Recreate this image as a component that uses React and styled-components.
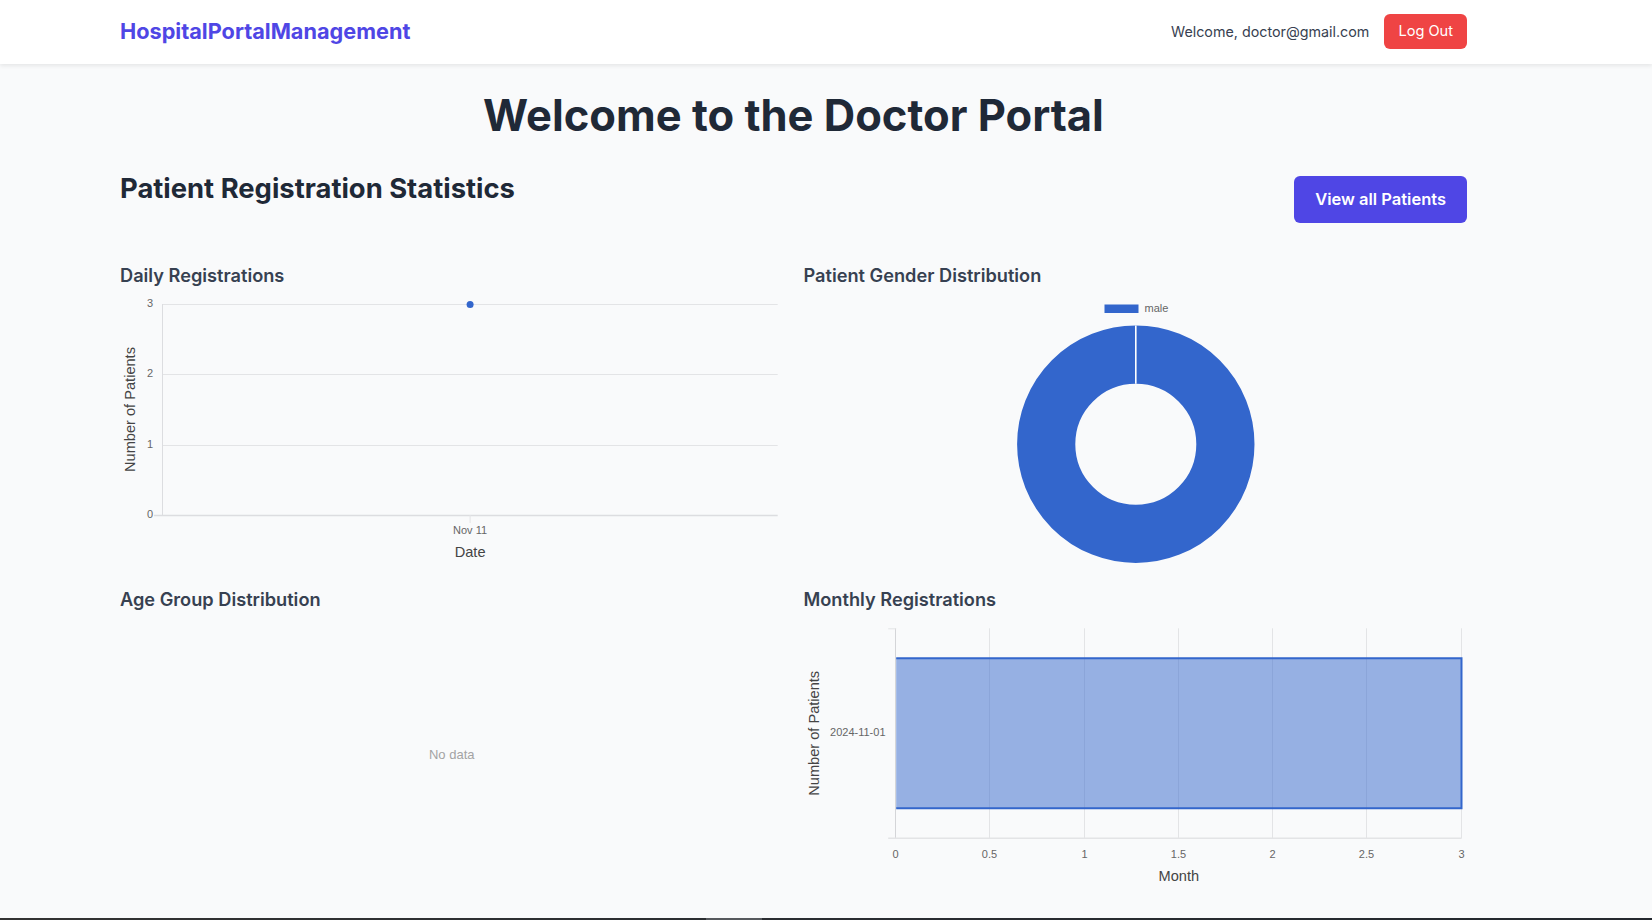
import React from "react";
import styled, { createGlobalStyle } from "styled-components";

const GlobalStyle = createGlobalStyle`
  html, body { margin: 0; padding: 0; }
  body {
    background: #f9fafb;
    font-family: Inter, "Noto Sans", sans-serif;
    overflow: hidden;
  }
  * { box-sizing: border-box; }
`;

const BLUE = "#3366cc";
const CHART_FONT = '"Liberation Sans", Arial, sans-serif';

const Container = styled.div`
  width: 1347px;
  margin-left: 120px;
`;

const NavBar = styled.header`
  background: #ffffff;
  box-shadow: 0 2px 4px rgba(0, 0, 0, 0.08);
  position: relative;
  z-index: 1;
  padding-bottom: 2px;
`;

const NavInner = styled(Container)`
  height: 62px;
  display: flex;
  align-items: center;
  justify-content: space-between;
`;

const Brand = styled.a`
  font-size: 21.7px;
  font-weight: 700;
  color: #4f46e5;
  text-decoration: none;
`;

const NavRight = styled.div`
  display: flex;
  align-items: center;
  gap: 15px;
`;

const WelcomeText = styled.span`
  font-size: 14.3px;
  color: #374151;
`;

const LogoutButton = styled.button`
  background: #ef4444;
  color: #ffffff;
  border: 0;
  border-radius: 6px;
  font-family: Inter, sans-serif;
  font-size: 14.6px;
  height: 35px;
  padding: 0 14px;
`;

const Main = styled(Container).attrs({ as: "main" })`
  padding: 25px 0 29px;
`;

const PageTitle = styled.h1`
  margin: 0 0 29px;
  text-align: center;
  font-size: 43.5px;
  line-height: 52px;
  font-weight: 700;
  color: #1f2937;
`;

const StatsHeader = styled.div`
  display: flex;
  align-items: center;
  justify-content: space-between;
  margin-bottom: 33px;
`;

const StatsTitle = styled.h2`
  margin: 1px 0 23px;
  font-size: 27.4px;
  line-height: 34px;
  font-weight: 700;
  color: #1f2937;
`;

const PrimaryButton = styled.button`
  background: #4f46e5;
  color: #ffffff;
  border: 0;
  border-radius: 6px;
  height: 47px;
  padding: 0 21px;
  font-family: Inter, sans-serif;
  font-size: 16.5px;
  font-weight: 600;
`;

const ChartGrid = styled.div`
  display: grid;
  grid-template-columns: 1fr 1fr;
  column-gap: 20px;
  row-gap: 20px;
`;

const Card = styled.section`
  display: flex;
  flex-direction: column;
`;

const CardTitle = styled.h3`
  margin: 0 0 8px;
  font-size: 18.2px;
  line-height: 28px;
  font-weight: 600;
  color: #374151;
`;

const ChartBox = styled.div`
  height: 268px;
  display: flex;
  align-items: center;
  justify-content: center;
`;

const ChartSvg = styled.svg`
  display: block;
  width: 100%;
  height: 268px;
  overflow: visible;
`;

const EmptyText = styled.span`
  font-family: ${CHART_FONT};
  font-size: 13px;
  color: #a3a3a3;
  margin-top: -2px;
`;

const Footer = styled.footer`
  height: 40px;
  background: linear-gradient(to right, #333333, #2a2d31 50%, #24282e);
  display: flex;
`;

const FooterTab = styled.div`
  margin-left: 706px;
  width: 56px;
  background: #56595d;
`;

const W = 663.5;

function AxisTitle({ x, y, rotate, children }) {
  return (
    <text
      x={x}
      y={y}
      transform={rotate ? `rotate(-90 ${x} ${y})` : undefined}
      textAnchor="middle"
      dominantBaseline="middle"
      fontFamily={CHART_FONT}
      fontSize="14.6"
      fill="#444"
    >
      {children}
    </text>
  );
}

function Tick({ x, y, anchor = "middle", children }) {
  return (
    <text
      x={x}
      y={y}
      textAnchor={anchor}
      dominantBaseline="middle"
      fontFamily={CHART_FONT}
      fontSize="11"
      fill="#666"
    >
      {children}
    </text>
  );
}

function DailyChart() {
  const x0 = 42.5;
  const x1 = 657.7;
  const y0 = 7;
  const y1 = 218;
  const values = [3, 2, 1, 0];
  const cx = (x0 + x1) / 2;
  return (
    <ChartSvg viewBox={`0 0 ${W} 268`}>
      {values.map((v, i) => {
        const y = Math.round(y0 + (i * (y1 - y0)) / 3) + 0.5;
        return (
          <g key={v}>
            <line
              x1={v === 0 ? 34 : x0}
              x2={x1}
              y1={y}
              y2={y}
              stroke={v === 0 ? "#dcdde0" : "#e3e4e6"}
              strokeWidth={v === 0 ? 1.5 : 1}
            />
            <Tick x={33} y={y} anchor="end">
              {v}
            </Tick>
          </g>
        );
      })}
      <line x1={x0} x2={x0} y1={y0} y2={y1} stroke="#dcdde0" />
      <line x1={cx} x2={cx} y1={y1} y2={y1 + 8} stroke="#e3e4e6" />
      <circle cx={cx} cy={y0 + 0.5} r="3.5" fill={BLUE} />
      <Tick x={cx} y={234}>
        Nov 11
      </Tick>
      <AxisTitle x={cx} y={256}>
        Date
      </AxisTitle>
      <AxisTitle x={11} y={112.5} rotate>
        Number of Patients
      </AxisTitle>
    </ChartSvg>
  );
}

function GenderChart() {
  const cx = 331.8;
  const cy = 147.2;
  const outer = 118.7;
  const inner = 60.5;
  return (
    <ChartSvg viewBox={`0 0 ${W} 268`}>
      <rect x={300.5} y={7.5} width={34} height={8.5} fill={BLUE} />
      <text
        x={340.5}
        y={12}
        dominantBaseline="middle"
        fontFamily={CHART_FONT}
        fontSize="11"
        fill="#666"
      >
        male
      </text>
      <circle
        cx={cx}
        cy={cy}
        r={(outer + inner) / 2}
        fill="none"
        stroke={BLUE}
        strokeWidth={outer - inner}
      />
      <line
        x1={cx}
        x2={cx}
        y1={cy - outer}
        y2={cy - inner}
        stroke="#ffffff"
        strokeWidth="1.6"
      />
    </ChartSvg>
  );
}

function MonthlyChart() {
  const x0 = 92.2;
  const x1 = 657.5;
  const y0 = 7.3;
  const y1 = 217.3;
  const ticks = [0, 0.5, 1, 1.5, 2, 2.5, 3];
  const step = (x1 - x0) / 6;
  const barTop = 37.3;
  const barBottom = 187.3;
  return (
    <ChartSvg viewBox={`0 0 ${W} 268`}>
      {ticks.map((t, i) => {
        const x = Math.round(x0 + i * step) - 0.5;
        return (
          <g key={t}>
            <line
              x1={x}
              x2={x}
              y1={y0}
              y2={y1}
              stroke={i === 0 ? "#d4d5d8" : "#e3e4e6"}
            />
            <Tick x={x} y={234}>
              {t}
            </Tick>
          </g>
        );
      })}
      <line x1={x0 - 8} x2={x0} y1={y0 + 0.5} y2={y0 + 0.5} stroke="#e3e4e6" />
      <line x1={x0 - 8} x2={x1} y1={y1} y2={y1} stroke="#e3e4e6" strokeWidth="1.5" />
      <rect
        x={x0}
        y={barTop}
        width={x1 - x0}
        height={barBottom - barTop}
        fill="rgba(51, 102, 204, 0.5)"
      />
      <path
        d={`M ${x0} ${barTop} H ${x1} V ${barBottom} H ${x0}`}
        fill="none"
        stroke={BLUE}
        strokeWidth="2"
      />
      <Tick x={81.5} y={112.3} anchor="end">
        2024-11-01
      </Tick>
      <AxisTitle x={374.85} y={256}>
        Month
      </AxisTitle>
      <AxisTitle x={11.5} y={112.3} rotate>
        Number of Patients
      </AxisTitle>
    </ChartSvg>
  );
}

export default function App() {
  return (
    <>
      <GlobalStyle />
      <NavBar>
        <NavInner>
          <Brand href="#">HospitalPortalManagement</Brand>
          <NavRight>
            <WelcomeText>Welcome, doctor@gmail.com</WelcomeText>
            <LogoutButton>Log Out</LogoutButton>
          </NavRight>
        </NavInner>
      </NavBar>
      <Main>
        <PageTitle>Welcome to the Doctor Portal</PageTitle>
        <StatsHeader>
          <StatsTitle>Patient Registration Statistics</StatsTitle>
          <PrimaryButton>View all Patients</PrimaryButton>
        </StatsHeader>
        <ChartGrid>
          <Card>
            <CardTitle>Daily Registrations</CardTitle>
            <ChartBox>
              <DailyChart />
            </ChartBox>
          </Card>
          <Card>
            <CardTitle>Patient Gender Distribution</CardTitle>
            <ChartBox>
              <GenderChart />
            </ChartBox>
          </Card>
          <Card>
            <CardTitle>Age Group Distribution</CardTitle>
            <ChartBox>
              <EmptyText>No data</EmptyText>
            </ChartBox>
          </Card>
          <Card>
            <CardTitle>Monthly Registrations</CardTitle>
            <ChartBox>
              <MonthlyChart />
            </ChartBox>
          </Card>
        </ChartGrid>
      </Main>
      <Footer>
        <FooterTab />
      </Footer>
    </>
  );
}
